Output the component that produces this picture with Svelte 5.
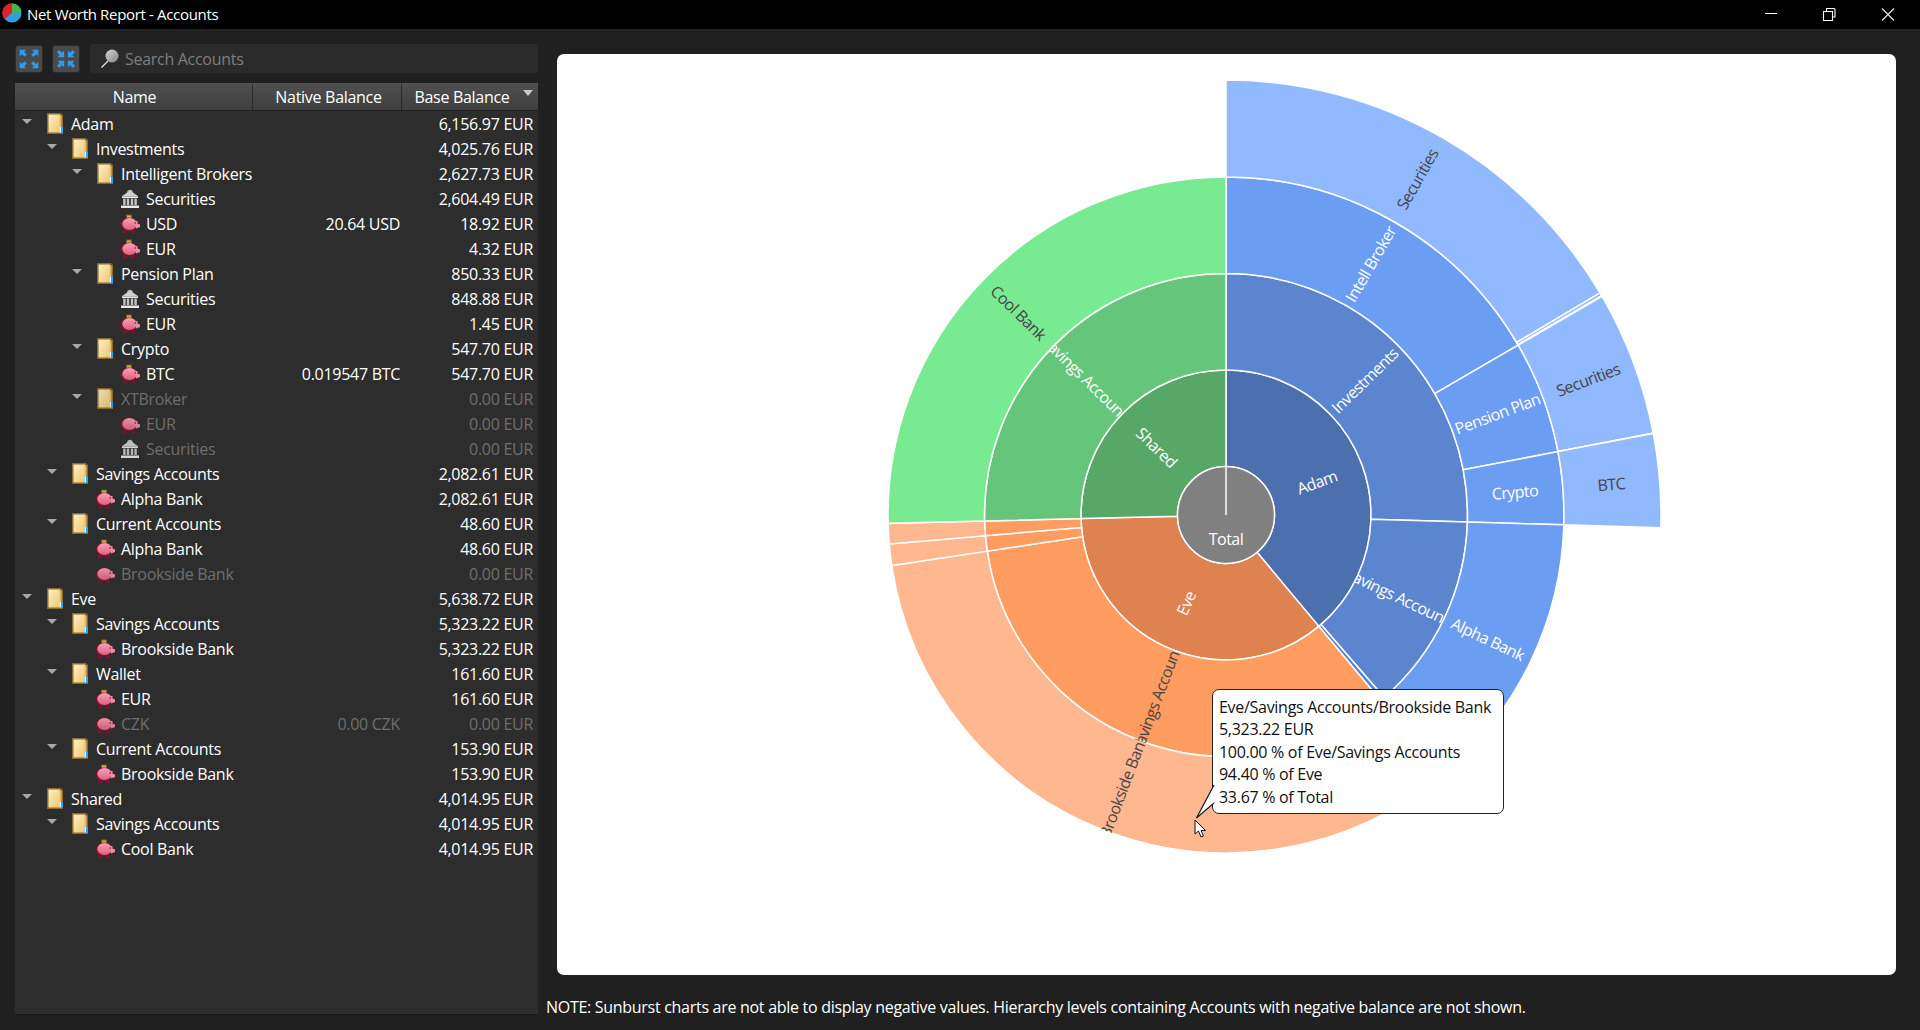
<script>
  const CX = 669, CY = 461, R = [48.5, 145, 241.5, 338, 435];
  const TOTAL = 15810.64;
  const pal = {
    A: ['#4c70ad', '#5b85ce', '#6b9ef3', '#90b9ff'],
    E: ['#de8250', '#ff9c60', '#ffb790'],
    S: ['#57a767', '#65c67b', '#78eb92']
  };
  const data = [
    { n: 'Adam', v: 6156.97, p: 'A', c: [
      { n: 'Investments', v: 4025.76, c: [
        { n: 'Intell Broker', v: 2627.73, c: [
          { n: 'Securities', v: 2604.49 }, { n: '', v: 18.92 }, { n: '', v: 4.32 } ] },
        { n: 'Pension Plan', v: 850.33, c: [ { n: 'Securities', v: 848.88 }, { n: '', v: 1.45 } ] },
        { n: 'Crypto', v: 547.7, c: [ { n: 'BTC', v: 547.7 } ] } ] },
      { n: 'Savings Accounts', v: 2082.61, c: [ { n: 'Alpha Bank', v: 2082.61 } ] },
      { n: '', v: 48.6, c: [ { n: '', v: 48.6 } ] } ] },
    { n: 'Eve', v: 5638.72, p: 'E', c: [
      { n: 'Savings Accounts', v: 5323.22, c: [ { n: 'Brookside Bank', v: 5323.22 } ] },
      { n: '', v: 161.6, c: [ { n: '', v: 161.6 } ] },
      { n: '', v: 153.9, c: [ { n: '', v: 153.9 } ] } ] },
    { n: 'Shared', v: 4014.95, p: 'S', c: [
      { n: 'Savings Accounts', v: 4014.95, c: [ { n: 'Cool Bank', v: 4014.95 } ] } ] }
  ];
  const pt = (r, a) => {
    const t = (a * Math.PI) / 180;
    return `${(CX + r * Math.sin(t)).toFixed(2)} ${(CY - r * Math.cos(t)).toFixed(2)}`;
  };
  const arc = (d, a0, a1) => {
    const r0 = R[d], r1 = R[d + 1], big = a1 - a0 > 180 ? 1 : 0;
    return `M${pt(r0, a0)} L${pt(r1, a0)} A${r1} ${r1} 0 ${big} 1 ${pt(r1, a1)} L${pt(r0, a1)} A${r0} ${r0} 0 ${big} 0 ${pt(r0, a0)}Z`;
  };
  const darkText = { A: [3], E: [1, 2], S: [2] };
  const segs = [];
  const walk = (nodes, d, start, p) => {
    let a = start;
    for (const nd of nodes) {
      const pk = nd.p || p, span = (nd.v / TOTAL) * 360, mid = a + span / 2;
      const rm = (R[d] + R[d + 1]) / 2, t = (mid * Math.PI) / 180;
      segs.push({
        id: 'c' + segs.length, d: arc(d, a, a + span), fill: pal[pk][d], label: nd.n,
        x: CX + rm * Math.sin(t), y: CY - rm * Math.cos(t),
        rot: mid < 180 ? mid - 90 : mid - 270,
        ink: darkText[pk].includes(d) ? '#454545' : '#ffffff'
      });
      if (nd.c) walk(nd.c, d + 1, a, pk);
      a += span;
    }
  };
  walk(data, 0, 0);

  const rows = [
    [0,'f','Adam','','6,156.97 EUR'],[1,'f','Investments','','4,025.76 EUR'],[2,'f','Intelligent Brokers','','2,627.73 EUR'],
    [3,'b','Securities','','2,604.49 EUR'],[3,'p','USD','20.64 USD','18.92 EUR'],[3,'p','EUR','','4.32 EUR'],
    [2,'f','Pension Plan','','850.33 EUR'],[3,'b','Securities','','848.88 EUR'],[3,'p','EUR','','1.45 EUR'],
    [2,'f','Crypto','','547.70 EUR'],[3,'p','BTC','0.019547 BTC','547.70 EUR'],
    [2,'f','XTBroker','','0.00 EUR',1],[3,'p','EUR','','0.00 EUR',1],[3,'b','Securities','','0.00 EUR',1],
    [1,'f','Savings Accounts','','2,082.61 EUR'],[2,'p','Alpha Bank','','2,082.61 EUR'],
    [1,'f','Current Accounts','','48.60 EUR'],[2,'p','Alpha Bank','','48.60 EUR'],[2,'p','Brookside Bank','','0.00 EUR',1],
    [0,'f','Eve','','5,638.72 EUR'],[1,'f','Savings Accounts','','5,323.22 EUR'],[2,'p','Brookside Bank','','5,323.22 EUR'],
    [1,'f','Wallet','','161.60 EUR'],[2,'p','EUR','','161.60 EUR'],[2,'p','CZK','0.00 CZK','0.00 EUR',1],
    [1,'f','Current Accounts','','153.90 EUR'],[2,'p','Brookside Bank','','153.90 EUR'],
    [0,'f','Shared','','4,014.95 EUR'],[1,'f','Savings Accounts','','4,014.95 EUR'],[2,'p','Cool Bank','','4,014.95 EUR']
  ].map(([depth, kind, name, native, base, dim]) => ({ depth, kind, name, native, base, dim }));
  const tip = ['Eve/Savings Accounts/Brookside Bank','5,323.22 EUR','100.00 % of Eve/Savings Accounts','94.40 % of Eve','33.67 % of Total'];
</script>

<div class="win">
  <svg class="defs" aria-hidden="true">
    <defs>
      <linearGradient id="fg" x1="0" x2="1" y1="0" y2="1"><stop offset="0" stop-color="#fdf0c4"/><stop offset="1" stop-color="#efc872"/></linearGradient>
      <linearGradient id="pg" x1="0" x2="0" y1="0" y2="1"><stop offset="0" stop-color="#f9a0b6"/><stop offset="1" stop-color="#e0607f"/></linearGradient>
      <linearGradient id="sph" x1="0" x2="1" y1="0" y2="1"><stop offset="0" stop-color="#d4d4d4"/><stop offset="1" stop-color="#858585"/></linearGradient>
    </defs>
  </svg>
  <header class="title">
    <svg class="logo" viewBox="0 0 20 20" aria-hidden="true">
      <circle cx="10" cy="10" r="9.500" fill="#2f9fe0"/>
      <path d="M10 10 L10 .5 A9.500 9.500 0 0 0 2.500 16Z" fill="#e0202c"/>
      <path d="M10 10 L10 .5 A9.500 9.500 0 0 1 19.500 9Z" fill="#46b64a"/>
    </svg>
    <span class="t">Net Worth Report - Accounts</span>
    <div class="wbtns">
      <svg viewBox="0 0 60 29"><path d="M25 13.500H37" stroke="#fff" stroke-width="1" fill="none"/></svg>
      <svg viewBox="0 0 60 29"><path d="M24.500 11.500h9v9h-9zM27.500 11V8.500h7.500a1 1 0 0 1 1 1V17h-2.500" stroke="#fff" stroke-width="1.100" fill="none"/></svg>
      <svg viewBox="0 0 60 29"><path d="M24 8.500L36 20.500M36 8.500L24 20.500" stroke="#eee" stroke-width="1.100" fill="none"/></svg>
    </div>
  </header>

  <div class="main">
    <aside class="left">
      <div class="tools">
        <button class="tb" aria-label="Expand all">
          <svg viewBox="0 0 28 28"><g fill="#2a9df0"><path d="M4 4h7l-2.200 2.200 3 3-2.400 2.400-3-3L4 11z"/><path d="M24 4v7l-2.200-2.200-3 3-2.400-2.400 3-3L17 4z"/><path d="M4 24v-7l2.400 2.400 3-3 2.400 2.400-3 3L11 24z"/><path d="M24 24h-7l2.200-2.200-3-3 2.400-2.400 3 3L24 17z"/></g></svg>
        </button>
        <button class="tb" aria-label="Collapse all">
          <svg viewBox="0 0 28 28"><g fill="#2a9df0"><path d="M12 12H5l2.200-2.200-3-3L6.600 4.400l3 3L12 5z"/><path d="M16 12V5l2.200 2.400 3-3 2.400 2.400-3 3L23 12z"/><path d="M12 16v7l-2.400-2.400-3 3-2.400-2.400 3-3L5 16z"/><path d="M16 16h7l-2.200 2.200 3 3-2.400 2.400-3-3L16 23z"/></g></svg>
        </button>
        <div class="search">
          <svg viewBox="0 0 20 20"><path d="M1.500 18.500L8 12" stroke="#e4e4e4" stroke-width="1.300" fill="none"/><circle cx="12" cy="7" r="6.500" fill="url(#sph)"/></svg>
          <span>Search Accounts</span>
        </div>
      </div>

      <div class="tree">
        <div class="thead">
          <div class="th name">Name</div>
          <div class="th nat">Native Balance</div>
          <div class="th base">Base Balance<i class="sort"></i></div>
        </div>
        {#each rows as r}
          <div class="row" class:dim={r.dim}>
            <div class="cell-name" style={`padding-left:${r.depth * 25}px`}>
              <span class="twist">{#if r.kind === 'f'}<i></i>{/if}</span>
              {#if r.kind === 'f'}
                <svg class="ic" viewBox="0 0 16 21">
                  <path d="M0 0h14.500v1.500H16V21H0z" fill="#8c6a2c"/>
                  <path d="M1.500 1.500h11.500v18H1.500z" fill="url(#fg)"/>
                  <path d="M12.500 2.500h2v11h-2z" fill="#e5bc6a"/>
                  <path d="M12.500 13.500h3.500v6.500h-3.500z" fill="#2fa4ef"/>
                  <path d="M12.500 13.500h1.500v6h-1.500z" fill="#eef6fb"/>
                </svg>
              {:else if r.kind === 'b'}
                <svg class="ic bk" viewBox="0 0 20 20">
                  <circle cx="10" cy="3.500" r="2.800" fill="#b4b4b4"/>
                  <path d="M10 1.500 L18.500 7.500H1.500Z" fill="#cfcfcf"/>
                  <path d="M2 7.500h16v1.500H2zM1 16.500h18v2.500H1z" fill="#e8e8e8"/>
                  <path d="M3.200 9.500h2.400v6.500H3.200zM6.800 9.500h2.400v6.500H6.800zM10.800 9.500h2.400v6.500h-2.400zM14.400 9.500h2.400v6.500h-2.400z" fill="#c4c4c4"/>
                </svg>
              {:else}
                <svg class="ic bk" viewBox="0 0 20 20">
                  {#if !r.dim}<path d="M6 .500h6v4H6z" fill="#7a5a20"/><path d="M7 1.500h4v3H7z" fill="#d9a94a"/>{/if}
                  <path d="M3 15h4v4.500H3zM11 15h4v4.500h-4z" fill="#6f1830"/>
                  <ellipse cx="8.800" cy="10.500" rx="8.500" ry="7" fill="#6f1830"/>
                  <ellipse cx="9.500" cy="10" rx="7.200" ry="6" fill="url(#pg)"/>
                  <path d="M14 5.500l1.500 1.500H17.500v2.500L20 10.500v2.500l-4 1.500z" fill="#f28aa4"/>
                  <circle cx="15.300" cy="9" r=".8" fill="#6f1830"/>
                </svg>
              {/if}
              <span class="lbl">{r.name}</span>
            </div>
            <div class="cell-nat">{r.native}</div>
            <div class="cell-base">{r.base}</div>
          </div>
        {/each}
      </div>
    </aside>

    <section class="right">
      <div class="chart">
        <svg class="sun" viewBox="0 0 1339 921" role="img" aria-label="Sunburst chart">
          <defs>
            {#each segs as s}
              <clipPath id={s.id}><path d={s.d}/></clipPath>
            {/each}
          </defs>
          {#each segs as s}
            <path d={s.d} fill={s.fill} stroke="#fff" stroke-width="1.500"/>
          {/each}
          <circle cx={CX} cy={CY} r={R[0]} fill="#808080" stroke="#fff" stroke-width="1.500"/>
          <path d={`M${CX} ${CY - R[0]}V${CY}`} stroke="#fff" stroke-width="1.500"/>
          <text class="lab" x={CX} y={CY + 24} fill="#fff">Total</text>
          {#each segs as s}
            {#if s.label}
              <g clip-path={`url(#${s.id})`}>
                <text class="lab" x={s.x} y={s.y} fill={s.ink} transform={`rotate(${s.rot} ${s.x} ${s.y})`}>{s.label}</text>
              </g>
            {/if}
          {/each}
        </svg>

        <div class="tip">
          {#each tip as line}<div>{line}</div>{/each}
          <svg class="tail" viewBox="0 0 20 36"><path d="M19 1 L1.500 34 L19 19" fill="#fff"/><path d="M19 1 L1.500 34 L19 19" fill="none" stroke="#222" stroke-width="1.300"/></svg>
        </div>
        <svg class="cursor" viewBox="0 0 14 20"><path d="M1 1V15L4.500 12L7 18L9.500 17L7 11.500H11.500Z" fill="#fff" stroke="#111" stroke-width="1"/></svg>
      </div>
      <p class="note">NOTE: Sunburst charts are not able to display negative values. Hierarchy levels containing Accounts with negative balance are not shown.</p>
    </section>
  </div>
</div>

<style>
  :global(body) { margin: 0; background: #202020; }
  .defs { position: absolute; width: 0; height: 0; }
  .win { width: 1920px; height: 1030px; display: flex; flex-direction: column; overflow: hidden; background: #202020; color: #fff; font-family: "Open Sans", "Noto Sans", sans-serif; font-size: 16px; letter-spacing: -0.29px; }
  .title { height: 29px; background: #000; display: flex; align-items: center; flex: none; }
  .logo { width: 20px; height: 20px; margin: 0 5px 3px 2px; }
  .t { font-size: 15px; letter-spacing: -0.33px; padding-bottom: 2px; }
  .wbtns { margin-left: auto; display: flex; margin-right: 3.500px; }
  .wbtns svg { width: 60px; height: 29px; display: block; margin-right: -1px; }
  .main { flex: 1; display: flex; min-height: 0; }
  .left { width: 523px; margin-left: 15px; display: flex; flex-direction: column; flex: none; }
  .tools { display: flex; align-items: center; height: 29px; margin-top: 15px; }
  .tb { width: 28px; height: 28px; padding: 0; border: 1px solid #2a2a2a; border-radius: 3px; background: #4a4a4a; margin-right: 9px; }
  .tb svg { width: 26px; height: 26px; display: block; }
  .search { flex: 1; height: 29px; background: #2a2a2a; border-radius: 3px; display: flex; align-items: center; margin-left: 1px; color: #7e7e7e; }
  .search svg { width: 20px; height: 20px; margin: 0 5px 0 10px; }
  .tree { margin-top: 10px; height: 932px; background: #2d2d2d; border-bottom: 1px solid #1a1a1a; box-sizing: border-box; }
  .thead { height: 28px; padding-top: 1px; display: flex; background: linear-gradient(#505050, #3e3e3e); border-bottom: 1px solid #1f1f1f; box-sizing: border-box; }
  .th { display: flex; align-items: center; justify-content: center; border-right: 1px solid #2a2a2a; box-sizing: border-box; position: relative; }
  .name { width: 238px; padding-left: 2px; }
  .nat { width: 149px; padding-left: 3px; }
  .base { width: 136px; border-right: 0; padding-right: 16px; }
  .sort { position: absolute; right: 5px; top: 6px; border: 5px solid transparent; border-top: 6px solid #c8c8c8; border-bottom: 0; }
  .row { height: 25px; display: flex; align-items: center; }
  .row.dim { color: #6e6e6e; }
  .row.dim svg { opacity: .9; }
  .cell-name { width: 238px; display: flex; align-items: center; flex: none; height: 25px; white-space: nowrap; box-sizing: border-box; }
  .twist { width: 32px; flex: none; display: flex; justify-content: flex-start; }
  .twist i { border: 5px solid transparent; border-top: 5px solid #a8a8a8; border-bottom: 0; margin-left: 7px; transform: translateY(-2px); width: 0; }
  .ic { width: 16px; height: 21px; flex: none; }
  .ic.bk { width: 20px; height: 20px; margin-left: -2px; margin-right: -2px; }
  .lbl { margin-left: 8px; }
  .cell-nat { width: 147px; text-align: right; flex: none; }
  .cell-base { flex: 1; text-align: right; padding-right: 5px; }
  .right { flex: 1; display: flex; flex-direction: column; margin-left: 8px; min-width: 0; }
  .chart { position: relative; height: 921px; width: 1339px; margin-left: 11px; margin-top: 25px; background: #fff; border-radius: 7px; flex: none; }
  .sun { display: block; width: 1339px; height: 921px; }
  .lab { font-family: "Open Sans", "Noto Sans", sans-serif; font-size: 16px; text-anchor: middle; dominant-baseline: central; letter-spacing: -0.55px; }
  .tip { position: absolute; left: 655px; top: 635px; width: 292px; height: 125px; box-sizing: border-box; padding: 6px 0 0 6px; background: #fff; border: 1.500px solid #222; border-radius: 7px; color: #111; line-height: 22.400px; font-size: 16px; letter-spacing: -0.29px; white-space: nowrap; }
  .tail { position: absolute; left: -18px; top: 94px; width: 20px; height: 36px; overflow: visible; }
  .cursor { position: absolute; left: 637px; top: 765px; width: 14px; height: 20px; }
  .note { margin: 21px 0 0 0; white-space: nowrap; }
</style>
